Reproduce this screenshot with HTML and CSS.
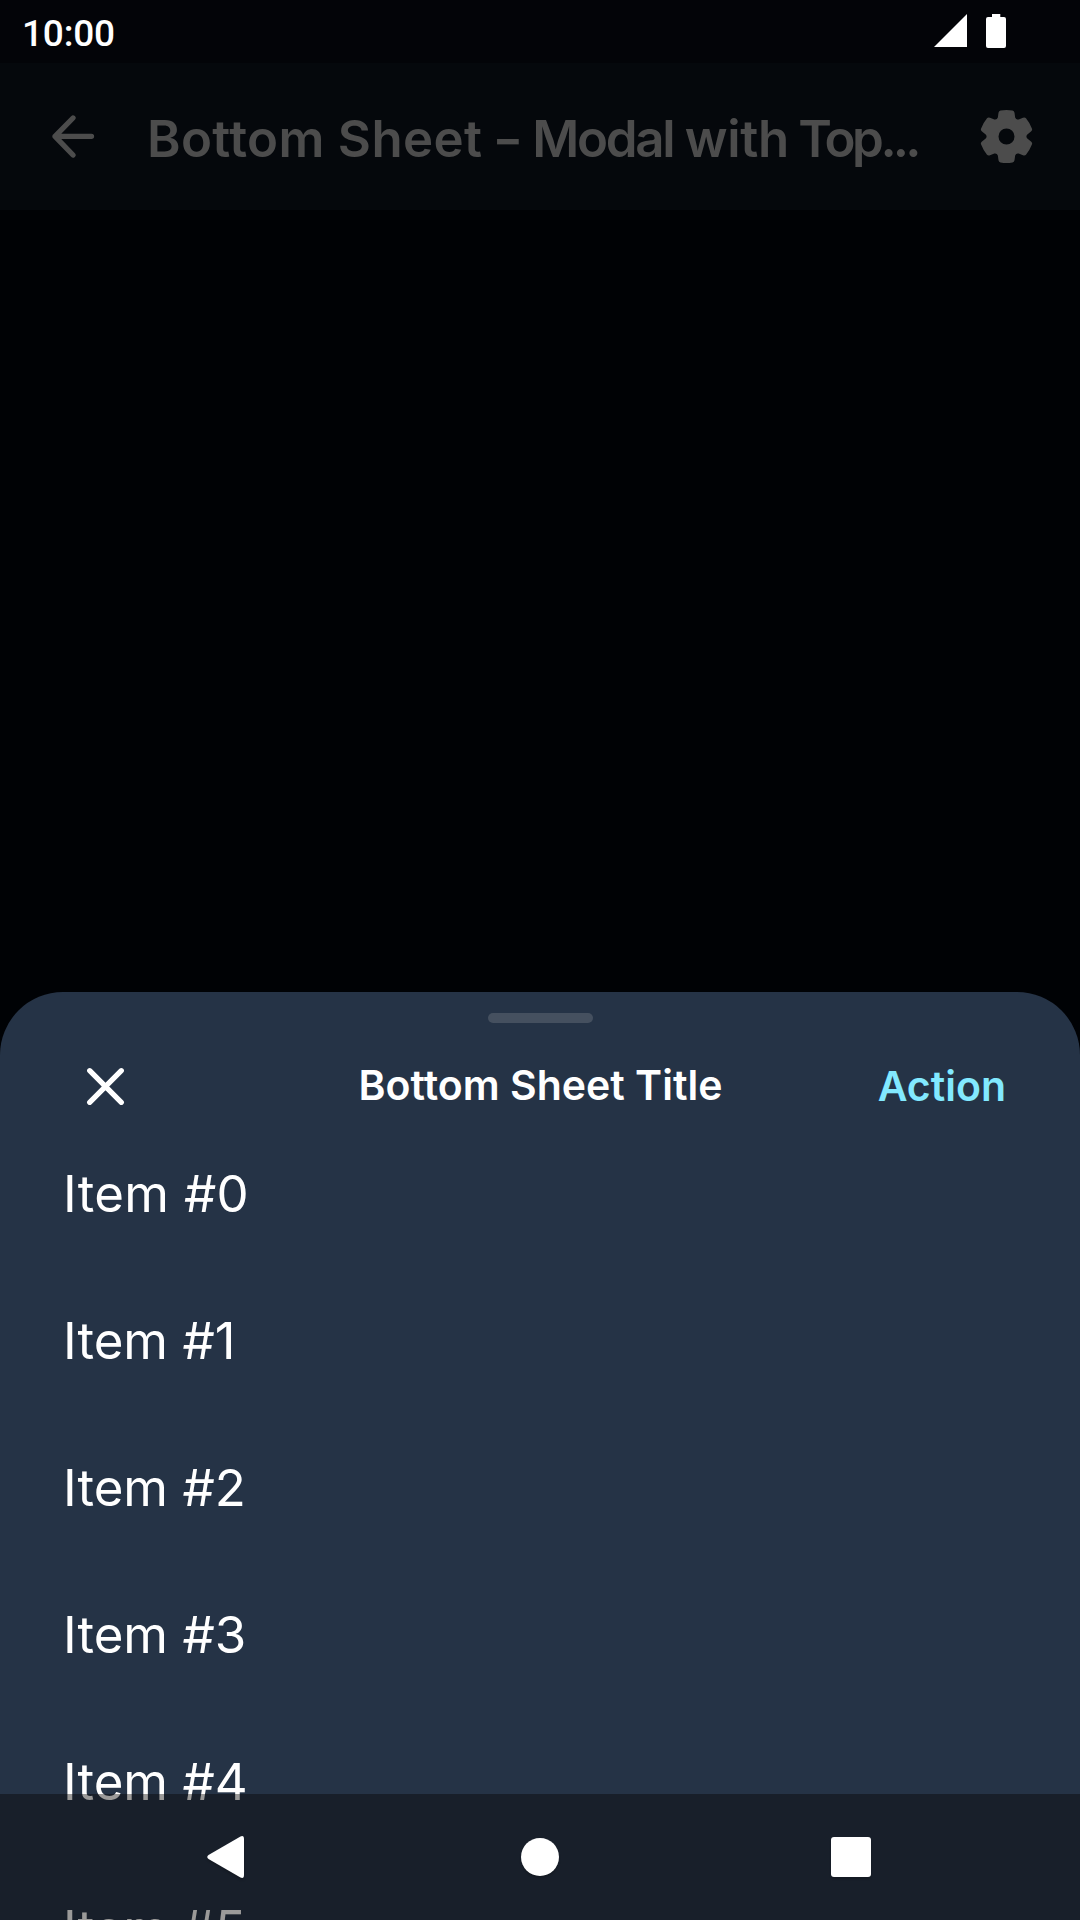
FILE: index.html
```html
<!DOCTYPE html>
<html lang="en">
<head>
<meta charset="utf-8">
<title>Bottom Sheet - Modal with Top Bar</title>
<link rel="stylesheet" href="styles.css">
</head>
<body>
<div class="screen">
  <header class="status-bar">
    <span class="clock">10:00</span>
    <div class="status-icons">
      <svg class="signal" viewBox="0 0 33 33"><path d="M33 0V33H0Z"/></svg>
      <svg class="battery" viewBox="0 0 20 34"><path d="M6 0h8.300v3H18q2 0 2 2V32q0 2-2 2H2q-2 0-2-2V5q0-2 2-2H6Z"/></svg>
    </div>
  </header>
  <div class="app-bar">
    <svg class="back" viewBox="0 0 42 43"><path d="M21 3L3 21.300L21 40M3 21.300H39.500"/></svg>
    <h1 class="app-title"><span class="wide">Bottom Sheet</span> <span class="dash">-</span> <span class="tight">Modal</span> <span class="with">with</span> <span class="top">Top</span><span class="dots">...</span></h1>
    <svg class="gear" viewBox="-79.500 -79.500 159 159"><path fill-rule="evenodd" d="M-26-57L-24-71Q-23-77-18-78Q0-81 18-78Q23-77 24-71L26-57Q28.500-49.400 36.400-51L49.500-56.300Q55.200-58.400 58.500-54.600Q70.100-40.500 76.500-23.400Q78.200-18.600 73.500-14.700L62.400-6Q57 0 62.400 6L73.500 14.700Q78.200 18.600 76.500 23.400Q70.100 40.500 58.500 54.600Q55.200 58.400 49.500 56.300L36.400 51Q28.500 49.400 26 57L24 71Q23 77 18 78Q0 81-18 78Q-23 77-24 71L-26 57Q-28.500 49.400-36.400 51L-49.500 56.300Q-55.200 58.400-58.500 54.600Q-70.100 40.500-76.500 23.400Q-78.200 18.600-73.500 14.700L-62.400 6Q-57 0-62.400-6L-73.500-14.700Q-78.200-18.600-76.500-23.400Q-70.100-40.500-58.500-54.600Q-55.200-58.400-49.500-56.300L-36.400-51Q-28.500-49.400-26-57ZM24 0A24 24 0 1 0-24 0A24 24 0 1 0 24 0Z"/></svg>
  </div>
  <main class="backdrop"></main>
  <section class="sheet">
    <div class="handle"></div>
    <div class="sheet-bar">
      <svg class="close" viewBox="0 0 37 37"><path d="M2.700 2.700L34.300 34.300M34.300 2.700L2.700 34.300"/></svg>
      <h2 class="sheet-title">Bottom Sheet Title</h2>
      <span class="action">Action</span>
    </div>
    <ul class="items">
      <li class="item">Item #0</li>
      <li class="item">Item #1</li>
      <li class="item">Item #2</li>
      <li class="item">Item #3</li>
      <li class="item">Item #4</li>
      <li class="item">Item #5</li>
    </ul>
  </section>
  <nav class="nav-bar">
    <svg class="nav-back" viewBox="0 0 37 42"><path d="M37 3V39Q37 43 33.500 41.500L1.500 23Q-1 21 1.500 19L33.500.500Q37-1 37 3Z"/></svg>
    <span class="nav-home"></span>
    <span class="nav-recents"></span>
  </nav>
</div>
</body>
</html>
```
FILE: styles.css
```css
* { box-sizing: border-box; margin: 0; padding: 0; }
body { background: #000205; color: #fff; font-family: Inter, "Liberation Sans", sans-serif; }
svg { display: block; flex: none; overflow: visible; }
.screen { position: relative; width: 1080px; height: 1920px; display: flex; flex-direction: column; overflow: hidden; }
.status-bar { flex: none; height: 63px; display: flex; justify-content: space-between; padding: 0 74px 0 22px; background: #030408; }
.clock { font: 500 37px/67px Roboto, sans-serif; letter-spacing: -0.200px; white-space: nowrap; }
.status-icons { display: flex; align-items: flex-start; gap: 19px; padding-top: 14px; fill: #fff; }
.signal { width: 33px; height: 33px; }
.battery { width: 20px; height: 34px; }
.app-bar { flex: none; height: 147px; display: flex; align-items: center; padding: 0 47px 0 52px; background: #05080c; }
.back { width: 42px; height: 43px; fill: none; stroke: #4c4c4c; stroke-width: 5.300; stroke-linecap: round; stroke-linejoin: round; }
.app-title { flex: 1; padding: 4px 0 0 53px; color: #4c4c4c; font-size: 51px; font-weight: 600; line-height: 63px; white-space: nowrap; letter-spacing: -0.500px; }
.wide { letter-spacing: 0.350px; }
.dash { display: inline-block; transform: scaleX(1.300); margin: 0 1px 0 1px; }
.tight { letter-spacing: -2.300px; }
.with { letter-spacing: -0.300px; margin-left: -1px; }
.top { letter-spacing: -3.500px; margin-left: -3px; }
.dots { letter-spacing: -3.900px; }
.gear { width: 53px; height: 53px; fill: #4c4c4c; }
.backdrop { flex: none; height: 782px; }
.sheet { flex: 1; display: flex; flex-direction: column; min-height: 0; overflow: hidden; background: #253346; border-radius: 63px 63px 0 0; padding-top: 21px; }
.handle { flex: none; align-self: center; width: 105px; height: 10px; border-radius: 5px; background: #45505f; }
.sheet-bar { flex: none; height: 126px; display: grid; grid-template-columns: 1fr auto 1fr; align-items: center; padding: 0 74px 0 87px; }
.close { width: 37px; height: 37px; fill: none; stroke: #fff; stroke-width: 5.300; stroke-linecap: round; }
.sheet-title { margin: 0 12px 2px 0; font-size: 41px; font-weight: 600; line-height: 50px; white-space: nowrap; }
.action { justify-self: end; color: #82e9ff; font-size: 41px; font-weight: 600; line-height: 50px; }
.items { list-style: none; }
.item { height: 147px; padding: 13px 0 0 63px; font-size: 51px; line-height: 63px; white-space: nowrap; }
.item:first-child { letter-spacing: 0.300px; }
.nav-bar { position: absolute; left: 0; right: 0; bottom: 0; height: 126px; display: grid; grid-template-columns: 1fr auto 1fr; align-items: center; padding: 0 209px 0 207px; background: rgba(4, 2, 0, 0.400); }
.nav-back { width: 37px; height: 42px; fill: #fff; filter: drop-shadow(0 2px 1px rgba(0, 0, 0, 0.200)); }
.nav-home { width: 38px; height: 38px; margin-left: 2px; border-radius: 50%; background: #fff; }
.nav-recents { width: 40px; height: 40px; justify-self: end; border-radius: 3px; background: #fff; }
.nav-home, .nav-recents { box-shadow: 0 2px 2px rgba(0, 0, 0, 0.200); }
```
